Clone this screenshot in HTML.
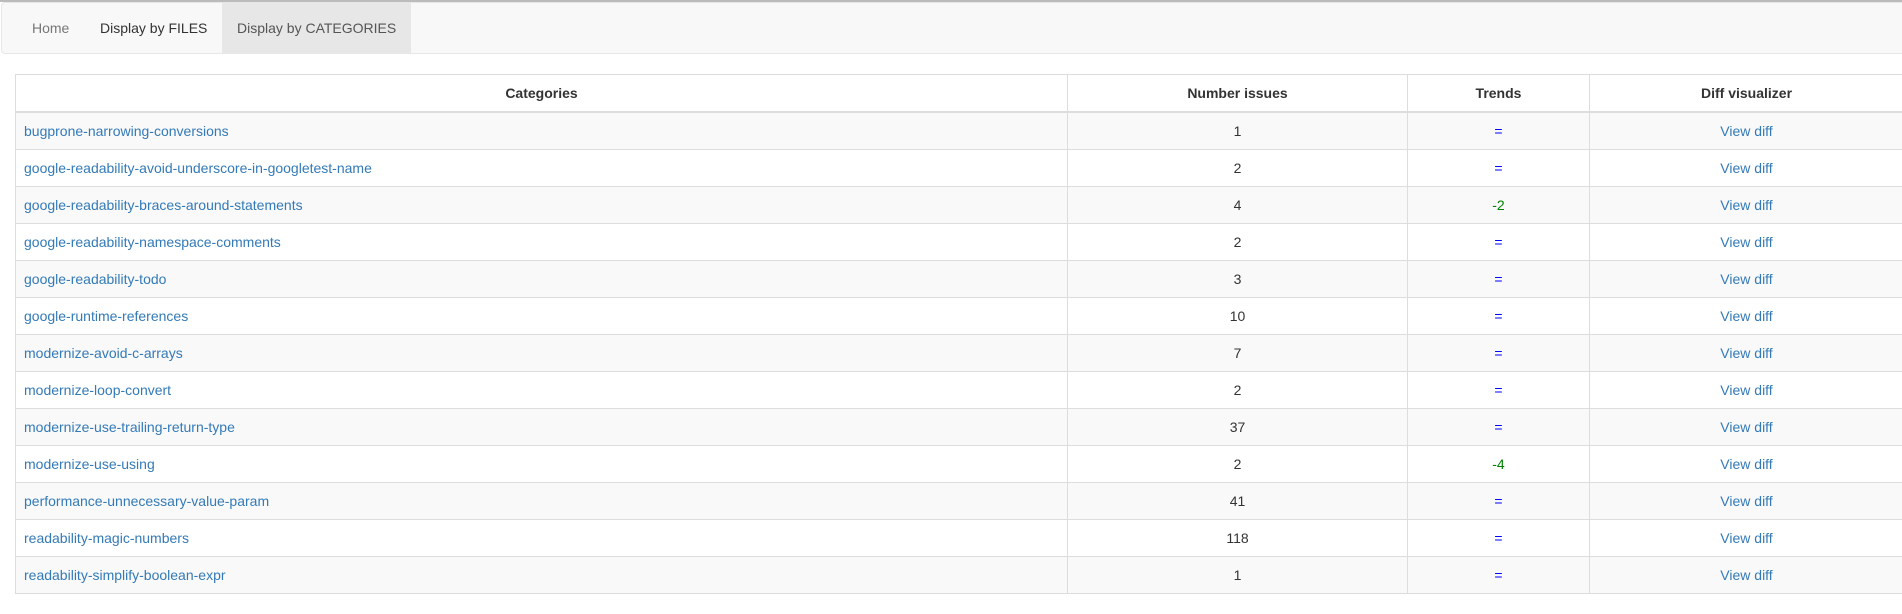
<!DOCTYPE html>
<html><head><meta charset="utf-8"><style>
*{box-sizing:border-box}
body{margin:0;font-family:"Liberation Sans",Arial,sans-serif;font-size:14px;color:#333;background:#fff;width:1902px;height:614px;overflow:hidden;position:relative}
.top{position:absolute;left:0;top:0;width:1902px;height:2px;background:#bbb}
.nav{position:absolute;left:1px;top:2px;width:1910px;height:52px;background:#f8f8f8;border:1px solid #e7e7e7;border-radius:4px}
.nav a{position:absolute;top:0;height:50px;line-height:50px;text-decoration:none;white-space:nowrap}
.active{background:#e7e7e7}
table{position:absolute;left:15px;top:74px;width:1889px;border-collapse:collapse;table-layout:fixed}
th,td{border:1px solid #ddd;padding:8px;line-height:20px;height:37px}
th{font-weight:bold;text-align:center;border-bottom:2px solid #ddd;height:36px}
td{text-align:center}
td:first-child{text-align:left}
tbody tr:nth-child(odd){background:#f9f9f9}
a.l{color:#337ab7;text-decoration:none}
.eq{color:#00f}.g{color:#008000}
</style></head><body>
<div class="top"></div>
<div class="nav">
<a style="left:15px;padding:0 15px;color:#777">Home</a>
<a style="left:83px;padding:0 15px;color:#333">Display by FILES</a>
<a class="active" style="left:220px;width:189px;padding:0 0 0 15px;color:#555">Display by CATEGORIES</a>
</div>
<table>
<colgroup><col style="width:1052px"><col style="width:340px"><col style="width:182px"><col></colgroup>
<thead><tr><th>Categories</th><th>Number issues</th><th>Trends</th><th>Diff visualizer</th></tr></thead>
<tbody>
<tr><td><a class="l">bugprone-narrowing-conversions</a></td><td>1</td><td class="eq">=</td><td><a class="l">View diff</a></td></tr>
<tr><td><a class="l">google-readability-avoid-underscore-in-googletest-name</a></td><td>2</td><td class="eq">=</td><td><a class="l">View diff</a></td></tr>
<tr><td><a class="l">google-readability-braces-around-statements</a></td><td>4</td><td class="g">-2</td><td><a class="l">View diff</a></td></tr>
<tr><td><a class="l">google-readability-namespace-comments</a></td><td>2</td><td class="eq">=</td><td><a class="l">View diff</a></td></tr>
<tr><td><a class="l">google-readability-todo</a></td><td>3</td><td class="eq">=</td><td><a class="l">View diff</a></td></tr>
<tr><td><a class="l">google-runtime-references</a></td><td>10</td><td class="eq">=</td><td><a class="l">View diff</a></td></tr>
<tr><td><a class="l">modernize-avoid-c-arrays</a></td><td>7</td><td class="eq">=</td><td><a class="l">View diff</a></td></tr>
<tr><td><a class="l">modernize-loop-convert</a></td><td>2</td><td class="eq">=</td><td><a class="l">View diff</a></td></tr>
<tr><td><a class="l">modernize-use-trailing-return-type</a></td><td>37</td><td class="eq">=</td><td><a class="l">View diff</a></td></tr>
<tr><td><a class="l">modernize-use-using</a></td><td>2</td><td class="g">-4</td><td><a class="l">View diff</a></td></tr>
<tr><td><a class="l">performance-unnecessary-value-param</a></td><td>41</td><td class="eq">=</td><td><a class="l">View diff</a></td></tr>
<tr><td><a class="l">readability-magic-numbers</a></td><td>118</td><td class="eq">=</td><td><a class="l">View diff</a></td></tr>
<tr><td><a class="l">readability-simplify-boolean-expr</a></td><td>1</td><td class="eq">=</td><td><a class="l">View diff</a></td></tr>
</tbody></table>
</body></html>
